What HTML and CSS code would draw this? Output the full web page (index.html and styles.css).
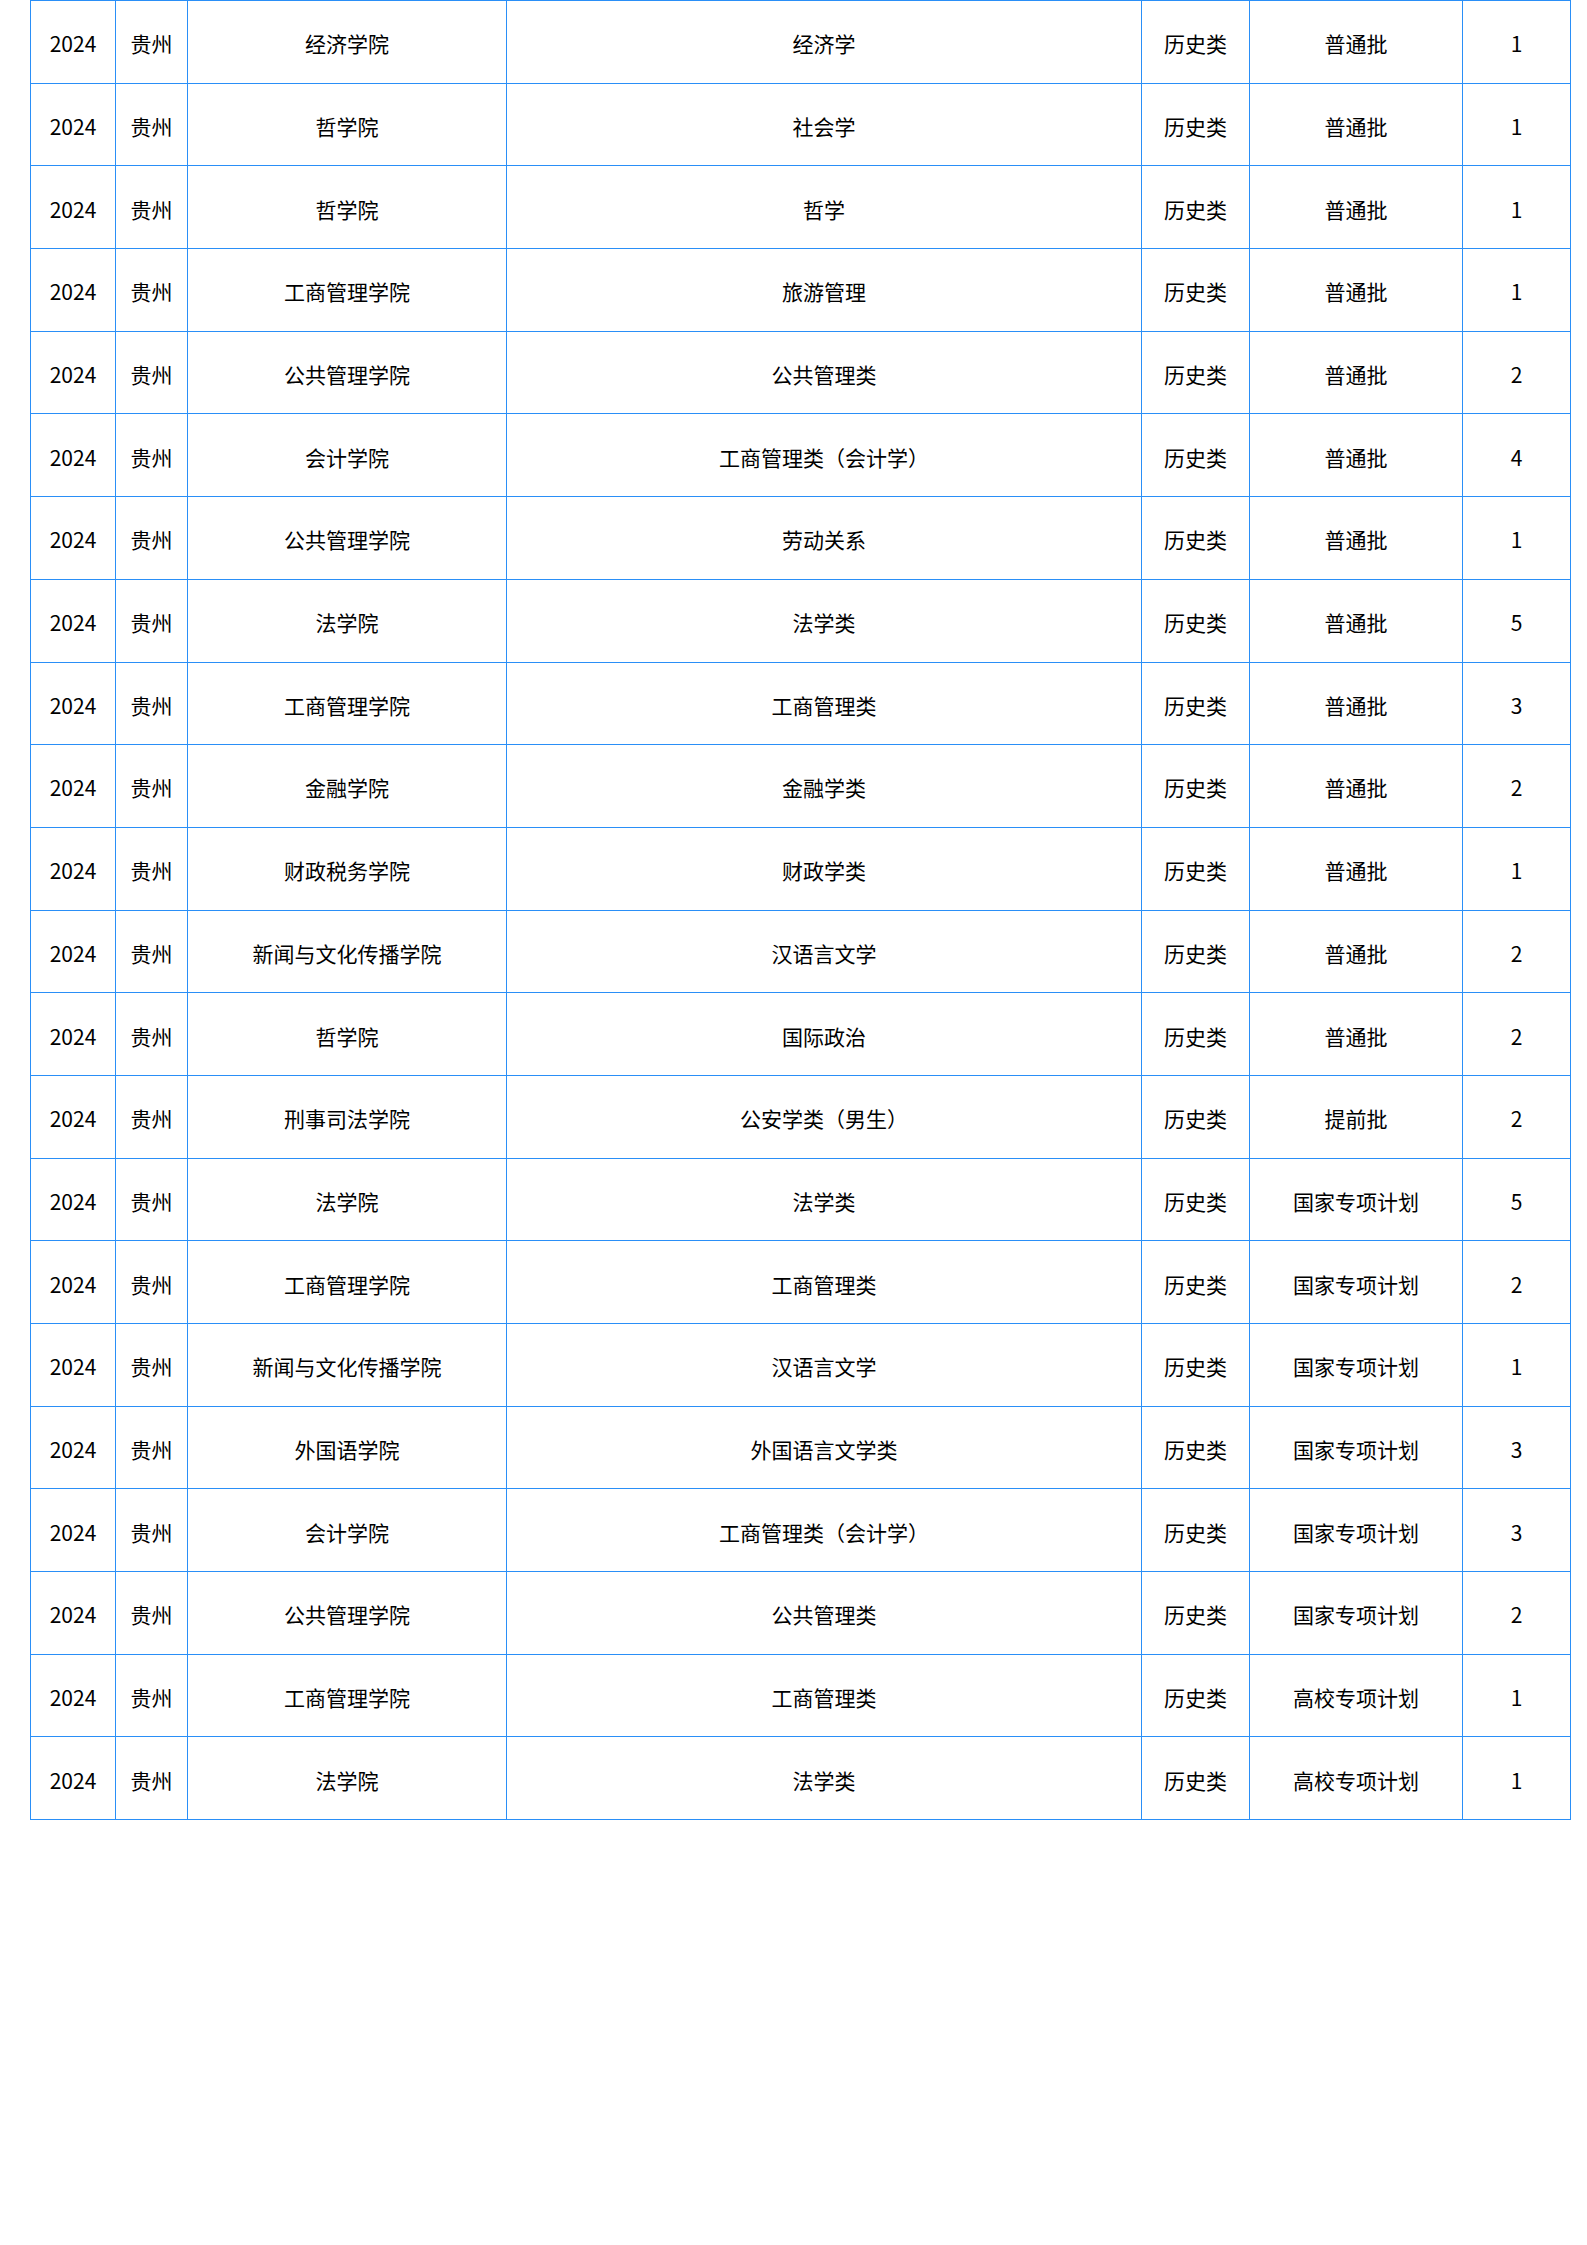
FILE: index.html
```html
<!DOCTYPE html>
<html lang="zh-CN">
<head>
<meta charset="utf-8">
<title>录取计划</title>
<link rel="stylesheet" href="styles.css">
</head>
<body>
<div class="page">
<table class="plan">
<colgroup>
<col class="c-year"><col class="c-prov"><col class="c-school"><col class="c-major"><col class="c-type"><col class="c-batch"><col class="c-num">
</colgroup>
<tbody>
<tr><td>2024</td><td>贵州</td><td>经济学院</td><td>经济学</td><td>历史类</td><td>普通批</td><td>1</td></tr>
<tr><td>2024</td><td>贵州</td><td>哲学院</td><td>社会学</td><td>历史类</td><td>普通批</td><td>1</td></tr>
<tr><td>2024</td><td>贵州</td><td>哲学院</td><td>哲学</td><td>历史类</td><td>普通批</td><td>1</td></tr>
<tr><td>2024</td><td>贵州</td><td>工商管理学院</td><td>旅游管理</td><td>历史类</td><td>普通批</td><td>1</td></tr>
<tr><td>2024</td><td>贵州</td><td>公共管理学院</td><td>公共管理类</td><td>历史类</td><td>普通批</td><td>2</td></tr>
<tr><td>2024</td><td>贵州</td><td>会计学院</td><td>工商管理类（会计学）</td><td>历史类</td><td>普通批</td><td>4</td></tr>
<tr><td>2024</td><td>贵州</td><td>公共管理学院</td><td>劳动关系</td><td>历史类</td><td>普通批</td><td>1</td></tr>
<tr><td>2024</td><td>贵州</td><td>法学院</td><td>法学类</td><td>历史类</td><td>普通批</td><td>5</td></tr>
<tr><td>2024</td><td>贵州</td><td>工商管理学院</td><td>工商管理类</td><td>历史类</td><td>普通批</td><td>3</td></tr>
<tr><td>2024</td><td>贵州</td><td>金融学院</td><td>金融学类</td><td>历史类</td><td>普通批</td><td>2</td></tr>
<tr><td>2024</td><td>贵州</td><td>财政税务学院</td><td>财政学类</td><td>历史类</td><td>普通批</td><td>1</td></tr>
<tr><td>2024</td><td>贵州</td><td>新闻与文化传播学院</td><td>汉语言文学</td><td>历史类</td><td>普通批</td><td>2</td></tr>
<tr><td>2024</td><td>贵州</td><td>哲学院</td><td>国际政治</td><td>历史类</td><td>普通批</td><td>2</td></tr>
<tr><td>2024</td><td>贵州</td><td>刑事司法学院</td><td>公安学类（男生）</td><td>历史类</td><td>提前批</td><td>2</td></tr>
<tr><td>2024</td><td>贵州</td><td>法学院</td><td>法学类</td><td>历史类</td><td>国家专项计划</td><td>5</td></tr>
<tr><td>2024</td><td>贵州</td><td>工商管理学院</td><td>工商管理类</td><td>历史类</td><td>国家专项计划</td><td>2</td></tr>
<tr><td>2024</td><td>贵州</td><td>新闻与文化传播学院</td><td>汉语言文学</td><td>历史类</td><td>国家专项计划</td><td>1</td></tr>
<tr><td>2024</td><td>贵州</td><td>外国语学院</td><td>外国语言文学类</td><td>历史类</td><td>国家专项计划</td><td>3</td></tr>
<tr><td>2024</td><td>贵州</td><td>会计学院</td><td>工商管理类（会计学）</td><td>历史类</td><td>国家专项计划</td><td>3</td></tr>
<tr><td>2024</td><td>贵州</td><td>公共管理学院</td><td>公共管理类</td><td>历史类</td><td>国家专项计划</td><td>2</td></tr>
<tr><td>2024</td><td>贵州</td><td>工商管理学院</td><td>工商管理类</td><td>历史类</td><td>高校专项计划</td><td>1</td></tr>
<tr><td>2024</td><td>贵州</td><td>法学院</td><td>法学类</td><td>历史类</td><td>高校专项计划</td><td>1</td></tr>
</tbody>
</table>
</div>
</body>
</html>
```
FILE: styles.css
```css
html, body {
  margin: 0;
  padding: 0;
  background: #ffffff;
}
.page {
  padding: 0 0 0 30px;
}
.plan {
  border-collapse: collapse;
  table-layout: fixed;
  width: 1541px;
  font-family: "Noto Sans CJK SC", "Noto Sans", sans-serif;
  font-size: 21px;
  color: #000;
}
.c-year { width: 85px; }
.c-prov { width: 72px; }
.c-school { width: 319px; }
.c-major { width: 635px; }
.c-type { width: 108px; }
.c-batch { width: 213px; }
.c-num { width: 108px; }
.plan td {
  border: 1px solid #2a8ff7;
  height: 82.7px;
  padding: 4px 0 0 0;
  box-sizing: border-box;
  text-align: center;
  vertical-align: middle;
  white-space: nowrap;
  line-height: 1.2;
}
```
